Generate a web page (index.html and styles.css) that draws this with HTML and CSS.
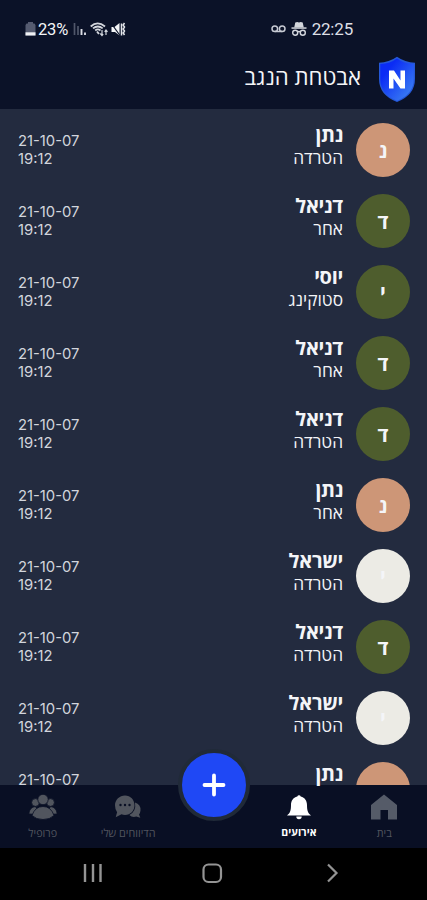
FILE: index.html
```
<!DOCTYPE html>
<html lang="he" dir="rtl">
<head>
<meta charset="utf-8">
<meta name="viewport" content="width=device-width, initial-scale=1">
<title>אבטחת הנגב</title>
<link rel="stylesheet" href="styles.css">
</head>
<body>
<div class="phone">
  <header class="top">
    <div class="status" dir="ltr">
      <div class="status-left">
        <svg class="battery" width="11" height="14" viewBox="0 0 11 14"><path d="M3 0h5v1.500h1.500L10.500 3v10.500h-10V3l1-1.500H3z" fill="#555b70"/><path d="M.5 10.300h10v3.200H.5z" fill="#f0f1f4"/></svg>
        <span class="percent">23%</span>
        <svg class="signal" width="14" height="14" viewBox="0 0 14 14"><path d="M1.500 1v12M5 4v9" stroke="#50576a" stroke-width="1.700"/><path d="M8.500 7v6M12 10.500V13" stroke="#d9dce3" stroke-width="1.900"/></svg>
        <svg class="wifi" width="18" height="15" viewBox="0 0 18 15" fill="none" stroke="#d4d7de"><path d="M.7 4.500Q7.500-1.700 15 4.500M3 6.400Q7.800 2.500 12.700 6.400M5.200 8.500Q7.800 6.300 10.500 8.500" stroke-width="1.800"/><path d="M7 9.500L9 12" stroke-width="2"/><path d="M12 8v5M10.300 11.500L12 13.500l1.200-1.300M16 13V8M14.700 9.800L16 8l1.500 1.800" stroke-width="1.200"/></svg>
        <svg class="mute" width="15" height="15" viewBox="0 0 15 15"><path d="M.5 5h3L8.500 1v12.500L4 10H.5z" fill="#f4f5f7"/><path d="M0 1l9 12.500" stroke="#0b1228" stroke-width="1.200"/><path d="M10.500 1.500v12M13.500 1l-1.300 2 1.300 2-1.300 2 1.300 2-1.300 2 1.300 2" fill="none" stroke="#e4e6eb" stroke-width="1.500"/></svg>
      </div>
      <div class="status-right">
        <svg width="15" height="8" viewBox="0 0 15 8" fill="none" stroke="#c7cad3" stroke-width="1.500"><circle cx="3.800" cy="3.700" r="2.800"/><circle cx="11.200" cy="3.700" r="2.800"/><path d="M3.800 6.500h7.400"/></svg>
        <svg class="incognito" width="16" height="16" viewBox="0 0 16 16"><path d="M4.300 1.500L6.300 1l1.700.6L9.700 1l2 .5 1.100 5H3.200z" fill="#d3d6dc"/><path d="M.5 6.300h15v1.500H.5z" fill="#d3d6dc"/><g fill="none" stroke="#d3d6dc" stroke-width="1.400"><circle cx="4.200" cy="11.700" r="2.500"/><circle cx="11.800" cy="11.700" r="2.500"/><path d="M6.500 11q1.500-1 3 0"/></g></svg>
        <span class="clock">22:25</span>
      </div>
    </div>
    <div class="brand">
      <svg class="shield" width="38" height="47" viewBox="0 0 38 47">
        <defs><linearGradient id="g" x1="0" y1="0" x2="1" y2="1"><stop offset=".25" stop-color="#0b2cf5"/><stop offset="1" stop-color="#438cf2"/></linearGradient></defs>
        <path d="M19 .8Q11 6.500 1 6.800V23Q1 39 19 46Q37 39 37 23V6.800Q27 6.500 19 .8Z" fill="#2558d8"/>
        <path d="M19 2.500Q12 7.500 2.300 8V23Q2.300 38 19 44.700Q35.700 38 35.700 23V8Q26 7.500 19 2.500Z" fill="url(#g)"/>
        <path d="M11 14.500H16L22.500 24.500V14.500H27V32.500H22.500L15.500 22.500V32.500H11Z" fill="#fff"/>
      </svg>
      <h1>אבטחת הנגב</h1>
    </div>
  </header>
  <main class="list">
    <div class="row"><div class="avatar clay">נ</div><div class="who"><b>נתן</b><span>הטרדה</span></div><div class="when" dir="ltr">21-10-07<br>19:12</div></div>
    <div class="row"><div class="avatar olive">ד</div><div class="who"><b>דניאל</b><span>אחר</span></div><div class="when" dir="ltr">21-10-07<br>19:12</div></div>
    <div class="row"><div class="avatar olive">י</div><div class="who"><b>יוסי</b><span>סטוקינג</span></div><div class="when" dir="ltr">21-10-07<br>19:12</div></div>
    <div class="row"><div class="avatar olive">ד</div><div class="who"><b>דניאל</b><span>אחר</span></div><div class="when" dir="ltr">21-10-07<br>19:12</div></div>
    <div class="row"><div class="avatar olive">ד</div><div class="who"><b>דניאל</b><span>הטרדה</span></div><div class="when" dir="ltr">21-10-07<br>19:12</div></div>
    <div class="row"><div class="avatar clay">נ</div><div class="who"><b>נתן</b><span>אחר</span></div><div class="when" dir="ltr">21-10-07<br>19:12</div></div>
    <div class="row"><div class="avatar ivory">י</div><div class="who"><b>ישראל</b><span>הטרדה</span></div><div class="when" dir="ltr">21-10-07<br>19:12</div></div>
    <div class="row"><div class="avatar olive">ד</div><div class="who"><b>דניאל</b><span>הטרדה</span></div><div class="when" dir="ltr">21-10-07<br>19:12</div></div>
    <div class="row"><div class="avatar ivory">י</div><div class="who"><b>ישראל</b><span>הטרדה</span></div><div class="when" dir="ltr">21-10-07<br>19:12</div></div>
    <div class="row"><div class="avatar clay partial"></div><div class="who"><b>נתן</b></div><div class="when" dir="ltr">21-10-07</div></div>
  </main>
  <nav class="tabs">
    <div class="tab"><svg width="28" height="28" viewBox="0 0 28 28"><path d="M14 1.500L27 12V26.500H18V17H10.500V26.500H1V12Z" fill="#555b68"/></svg><span>בית</span></div>
    <div class="tab active"><svg width="26" height="28" viewBox="0 0 26 28"><path d="M11.300 3.500a1.800 1.800 0 0 1 3.400 0C19 4.500 21 8 21 12c0 6 1 8 4 10.500H1C4 20 5 18 5 12c0-4 2-7.500 6.300-8.500ZM10.300 23.500h5.400a2.700 2.700 0 0 1-5.400 0Z" fill="#fff"/></svg><span>אירועים</span></div>
    <div class="fab-slot"><div class="fab"><svg width="24" height="24" viewBox="0 0 24 24"><path d="M12 2.500v19M2.500 12h19" stroke="#fff" stroke-width="3.800" stroke-linecap="round"/></svg></div></div>
    <div class="tab"><svg width="28" height="28" viewBox="0 0 28 28"><path d="M21 9.500q6 2 5.500 8-.2 2.500-1.500 4l1.300 3.300-4-1.300q-4 1.300-7-1.500Q22.500 18.500 21 9.500Z" fill="#51555e"/><path d="M11 2.500c5.500 0 9.500 4.300 9.500 9.700S16.500 22 11 22q-2 0-3.500-.7L1.700 24.200l1.400-5Q1 16.500 1 12.200C1 6.800 5.500 2.500 11 2.500Z" fill="#51555e"/><g fill="#090f24"><circle cx="6.500" cy="12" r="1.200"/><circle cx="11" cy="12" r="1.200"/><circle cx="15.500" cy="12" r="1.200"/></g></svg><span>הדיווחים שלי</span></div>
    <div class="tab"><svg width="30" height="28" viewBox="0 0 30 28" fill="#51555e" stroke="#090f24" stroke-width=".8"><circle cx="7.500" cy="9.500" r="3.900"/><circle cx="22.500" cy="9.500" r="3.900"/><path d="M.8 21Q1.500 14 7.500 13.500L12 21.500ZM29.200 21Q28.500 14 22.500 13.500L18 21.500Z"/><circle cx="15" cy="6.500" r="5.200"/><path d="M4 22.500Q7 13.500 15 13.500T26 22.500Q22 26.500 15 26.500T4 22.500Z"/></svg><span>פרופיל</span></div>
  </nav>
  <footer class="system" dir="ltr">
    <div class="key"><svg width="20" height="20" viewBox="0 0 20 20"><path d="M2 1v18M10 1v18M17.500 1v18" stroke="#949494" stroke-width="2.400"/></svg></div>
    <div class="key"><svg width="21" height="21" viewBox="0 0 21 21"><rect x="1.500" y="1.500" width="17.500" height="17.500" rx="5" fill="none" stroke="#949494" stroke-width="2.200"/></svg></div>
    <div class="key"><svg width="13" height="20" viewBox="0 0 13 20"><path d="M2 1.500L10.500 10L2 18.500" fill="none" stroke="#949494" stroke-width="2.200"/></svg></div>
  </footer>
</div>
</body>
</html>
```
FILE: styles.css
```
* { box-sizing: border-box; }
body { margin: 0; background: #232b3f; color: #f4f5f8; font-family: "Open Sans", "Noto Sans", sans-serif; }
svg { display: block; flex: none; }
.phone { width: 427px; height: 900px; display: flex; flex-direction: column; overflow: hidden; }
.top { height: 109px; flex: none; background: #0b1228; }
.status { height: 52px; padding: 6px 74px 0 25px; display: flex; justify-content: space-between; align-items: center; font-family: Roboto, sans-serif; font-size: 17px; }
.status-left, .status-right { display: flex; align-items: center; }
.percent { margin-left: 2px; font-size: 16.500px; letter-spacing: -.2px; }
.signal { margin-left: 5px; }
.wifi { margin-left: 3px; }
.mute { margin-left: 3px; }
.incognito { margin-left: 5px; }
.clock { margin-left: 5px; color: #dddfe5; letter-spacing: -.2px; }
.brand { display: flex; align-items: center; height: 54px; padding-right: 11px; gap: 17px; }
h1 { margin: 0 0 5px; font-size: 22.200px; font-weight: 400; line-height: 30px; }
.list { position: relative; z-index: 1; height: 676px; flex: none; padding-top: 5.500px; background: #232b3f; }
.row { height: 71px; padding: 0 17px 0 18px; display: flex; align-items: center; }
.avatar { width: 54px; height: 54px; border-radius: 50%; display: flex; align-items: center; justify-content: center; flex: none; font-size: 20px; font-weight: 700; line-height: 28px; padding-top: 2px; }
.clay { background: #cd9677; }
.olive { background: #4e5d2d; }
.ivory { background: #ecebe5; }
.partial { clip-path: inset(0 0 31px 0); }
.who { height: 56px; margin-right: 13px; flex: 1; display: flex; flex-direction: column; }
.who b { font-size: 20px; line-height: 25px; font-weight: 700; letter-spacing: -.3px; }
.who span { font-size: 17.300px; line-height: 22px; }
.when { height: 54px; padding-top: 9px; font-family: Inter, sans-serif; font-size: 14.800px; line-height: 18px; color: #d2d5dc; }
.tabs { position: relative; z-index: 0; height: 63px; flex: none; background: #090f24; display: grid; grid-template-columns: repeat(5, 85.400px); color: #51555f; }
.tab { display: flex; flex-direction: column; align-items: center; padding-top: 8px; }
.tab span { font-size: 10.800px; line-height: 15px; margin-top: 4px; white-space: nowrap; }
.tab.active span { color: #fff; font-weight: 700; font-size: 10.500px; }
.fab-slot { position: relative; }
.fab { position: absolute; left: 7px; top: -36px; width: 72px; height: 72px; border-radius: 50%; background: #1f48f5; border: 4px solid #202a38; display: flex; align-items: center; justify-content: center; }
.tabs { z-index: 2; background: none; }
.phone { background: linear-gradient(#090f24, #090f24) 0 785px / 427px 63px no-repeat; }
.system { height: 52px; flex: none; background: #000; display: grid; grid-template-columns: repeat(3, 120px); justify-content: center; align-items: center; padding: 0 2px 2px 0; }
.key { display: flex; justify-content: center; }
```
